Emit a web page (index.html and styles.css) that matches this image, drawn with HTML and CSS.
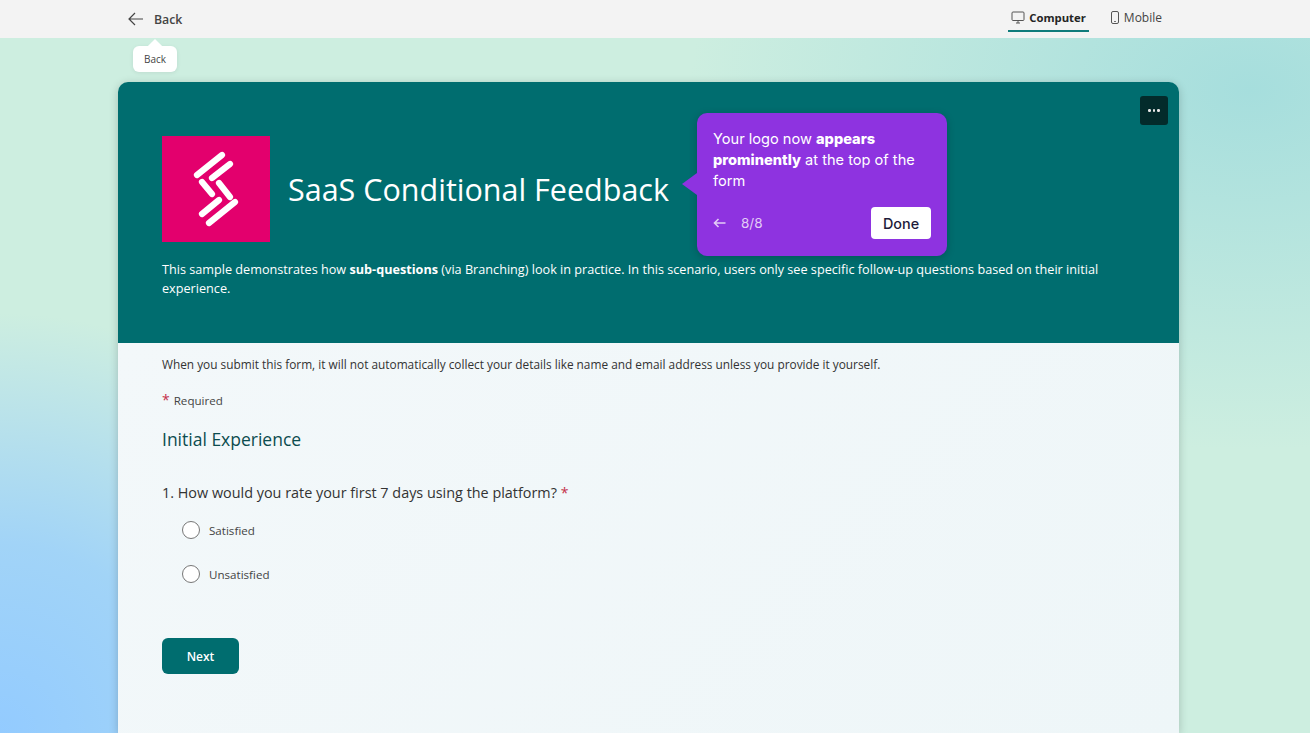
FILE: index.html
```html
<!DOCTYPE html>
<html>
<head>
	<meta charset="utf-8">
	<title>SaaS Conditional Feedback</title>
	<link rel="stylesheet" href="styles.css">
</head>
<body>
	<div class="topbar">
		<div class="backBtn">
			<svg width="16" height="14" viewBox="0 0 16 14" fill="none" stroke="#444" stroke-width="1.2">
				<path d="M15 7H1.2M7 1L1 7l6 6"/>
			</svg>
			<span>Back</span>
		</div>
		<div class="views">
			<div class="viewTab active">
				<svg width="14" height="13" viewBox="0 0 14 13" fill="none" stroke="#555" stroke-width="1">
					<rect x="1" y="1" width="12" height="8.5" rx="1"/>
					<path d="M5 12h4M7 9.5V12"/>
				</svg>
				<span>Computer</span>
			</div>
			<div class="viewTab">
				<svg width="10" height="13" viewBox="0 0 10 13" fill="none" stroke="#555" stroke-width="1">
					<rect x="1.5" y="0.5" width="7" height="12" rx="1.5"/>
					<path d="M4.2 10.5h1.6"/>
				</svg>
				<span>Mobile</span>
			</div>
		</div>
	</div>

	<div class="tooltip">Back</div>

	<div class="card">
		<div class="cardHead">
			<button class="moreBtn"><i></i><i></i><i></i></button>
			<div class="titleRow">
				<div class="logo">
					<svg width="108" height="106" viewBox="0 0 108 106" stroke="#fff" stroke-width="6.2" stroke-linecap="round">
						<path d="M35 39L60 19M50 42L68 28M40 46L50 58M57 47L68 61M40 78L57 64M47 87L73 66"/>
					</svg>
				</div>
				<h1>SaaS Conditional Feedback</h1>
			</div>
			<p class="desc">This sample demonstrates how <b>sub-questions</b> (via Branching) look in practice. In this scenario, users only see specific follow-up questions based on their initial experience.</p>
		</div>
		<div class="cardBody">
			<p class="notice">When you submit this form, it will not automatically collect your details like name and email address unless you provide it yourself.</p>
			<p class="required"><span class="star">*</span>Required</p>
			<h2>Initial Experience</h2>
			<p class="question">1. How would you rate your first 7 days using the platform? <span class="star">*</span></p>
			<div class="options">
				<label class="option"><span class="radio"></span>Satisfied</label>
				<label class="option"><span class="radio"></span>Unsatisfied</label>
			</div>
			<button class="nextBtn">Next</button>
		</div>
	</div>

	<div class="popover">
		<p>Your logo now <b>appears prominently</b> at the top of the form</p>
		<div class="popFoot">
			<svg width="13" height="10" viewBox="0 0 13 10" fill="none" stroke="#e3cdf6" stroke-width="1.6">
				<path d="M12.5 5H1.5M5.5 1L1.5 5l4 4"/>
			</svg>
			<span class="count">8/8</span>
			<button class="doneBtn">Done</button>
		</div>
	</div>
</body>
</html>
```

FILE: styles.css
```css
html, body {
	height: 100%;
	overflow: hidden;
}
body {
	margin: 0;
	font-family: "Open Sans", "Noto Sans", sans-serif;
	color: #242424;
	background-color: #c4ebe0;
	background-image:
		radial-gradient(ellipse 420px 420px at 0px 733px, #93cbff 0%, rgba(147,203,255,0.75) 45%, rgba(147,203,255,0) 100%),
		radial-gradient(ellipse 560px 360px at 1250px 90px, #a6dedd 0%, rgba(166,222,221,0) 100%),
		linear-gradient(180deg, #cdeee0 0%, #cdeee0 100%);
}
p, h1, h2 {
	margin: 0;
	font-weight: normal;
}
button {
	font-family: inherit;
	border: none;
}

/* top bar */
.topbar {
	height: 38px;
	background: #f3f3f3;
	display: flex;
	justify-content: space-between;
	align-items: center;
	padding: 0 145px 0 128px;
}
.backBtn {
	display: flex;
	align-items: center;
	gap: 10px;
	font-size: 12.3px;
	font-weight: 600;
	color: #444;
}
.views {
	display: flex;
	gap: 18px;
	align-self: flex-start;
}
.viewTab {
	height: 32px;
	box-sizing: border-box;
	padding: 4px 3px 0;
	display: flex;
	align-items: center;
	gap: 4px;
	font-size: 12px;
	color: #444;
	border-bottom: 2px solid transparent;
}
.viewTab.active {
	font-weight: 700;
	font-size: 11.3px;
	color: #242424;
	border-bottom-color: #0f7b7b;
}

/* tooltip under back button */
.tooltip {
	position: absolute;
	left: 133px;
	top: 46px;
	width: 44px;
	height: 26px;
	background: #fff;
	border-radius: 6px;
	font-size: 10px;
	color: #444;
	display: flex;
	align-items: center;
	justify-content: center;
	box-shadow: 0 1px 4px rgba(0,0,0,0.08);
}
.tooltip::before {
	content: "";
	position: absolute;
	left: 17px;
	top: -5px;
	width: 10px;
	height: 10px;
	background: #fff;
	transform: rotate(45deg);
}

/* form card */
.card {
	width: 1061px;
	height: 651px;
	margin: 44px 0 0 118px;
	border-radius: 10px 10px 0 0;
	box-shadow: 0 2px 10px rgba(0,0,0,0.2);
}
.cardHead {
	height: 261px;
	box-sizing: border-box;
	background: #006d6f;
	border-radius: 10px 10px 0 0;
	padding: 54px 44px 0 44px;
	color: #fff;
	position: relative;
}
.moreBtn {
	position: absolute;
	right: 11px;
	top: 14px;
	width: 28px;
	height: 29px;
	background: #032b2b;
	border-radius: 3px;
	display: flex;
	align-items: center;
	justify-content: center;
	gap: 2px;
	padding: 0;
}
.moreBtn i {
	width: 2.4px;
	height: 2.4px;
	background: #e8e8e8;
	border-radius: 50%;
}
.titleRow {
	display: flex;
	align-items: center;
	gap: 18px;
}
.logo {
	width: 108px;
	height: 106px;
	background: #e3006d;
	flex-shrink: 0;
}
.logo svg {
	display: block;
}
h1 {
	font-size: 30.5px;
	color: #fff;
}
.desc {
	font-size: 12.67px;
	line-height: 19px;
	margin-top: 18px;
}
.desc b {
	font-weight: 700;
}
.cardBody {
	height: 390px;
	box-sizing: border-box;
	padding: 12px 44px 0 44px;
	background: linear-gradient(135deg, #f3f8fa, #eef6f8);
}
.notice {
	font-size: 11.85px;
	line-height: 18px;
	color: #333;
}
.required {
	font-size: 11.6px;
	line-height: 18px;
	margin-top: 18px;
	color: #444;
}
.star {
	color: #c4314b;
	font-size: 14px;
}
.required .star {
	margin-right: 4px;
}
h2 {
	font-size: 17.5px;
	line-height: 26px;
	margin-top: 16px;
	color: #0c4c4e;
}
.question {
	font-size: 14.4px;
	line-height: 20px;
	margin-top: 31px;
	color: #333;
}
.options {
	margin-top: 17px;
	margin-left: 20px;
	display: flex;
	flex-direction: column;
	gap: 24px;
}
.option {
	display: flex;
	align-items: center;
	gap: 9px;
	height: 20px;
	font-size: 11.6px;
	color: #444;
}
.radio {
	width: 16px;
	height: 16px;
	background: #fff;
	border: 1.3px solid #777;
	border-radius: 50%;
}
.nextBtn {
	display: block;
	margin-top: 54px;
	width: 77px;
	height: 36px;
	background: #006d6f;
	color: #fff;
	border-radius: 6px;
	font-size: 12px;
	font-weight: 600;
}

/* purple onboarding popover */
.popover {
	position: absolute;
	left: 697px;
	top: 113px;
	width: 250px;
	height: 143px;
	box-sizing: border-box;
	padding: 16px;
	background: #8e33e0;
	border-radius: 10px;
	color: #fff;
	font-family: Inter, "Open Sans", sans-serif;
	box-shadow: 0 2px 8px rgba(0,0,0,0.2);
}
.popover::before {
	content: "";
	position: absolute;
	left: -15px;
	top: 60px;
	width: 15px;
	height: 22px;
	background: #8e33e0;
	clip-path: polygon(0 50%, 100% 0, 100% 100%);
}
.popover p {
	font-size: 14.6px;
	line-height: 21px;
}
.popover b {
	font-weight: 800;
}
.popFoot {
	display: flex;
	align-items: center;
	margin-top: 15px;
}
.count {
	margin-left: 15px;
	font-size: 13.5px;
	color: #e3cdf6;
}
.doneBtn {
	margin-left: auto;
	width: 60px;
	height: 32px;
	background: #fff;
	color: #1d1a3a;
	border-radius: 4px;
	font-size: 14.4px;
	font-family: Inter, sans-serif;
	font-weight: 500;
}
```
